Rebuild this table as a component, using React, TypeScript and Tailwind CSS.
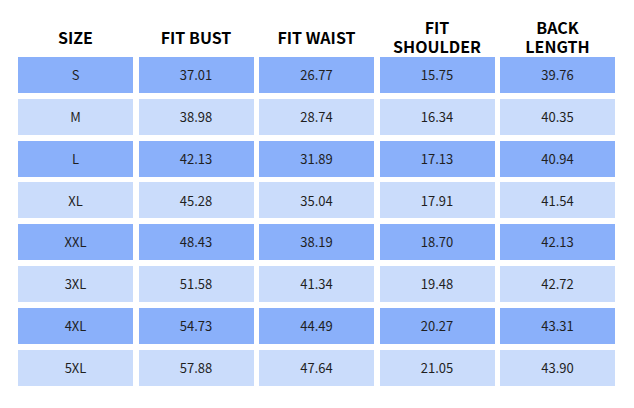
const headers = ['SIZE', 'FIT BUST', 'FIT WAIST', 'FIT SHOULDER', 'BACK LENGTH'];

const rows: string[][] = [
    ['S', '37.01', '26.77', '15.75', '39.76'],
    ['M', '38.98', '28.74', '16.34', '40.35'],
    ['L', '42.13', '31.89', '17.13', '40.94'],
    ['XL', '45.28', '35.04', '17.91', '41.54'],
    ['XXL', '48.43', '38.19', '18.70', '42.13'],
    ['3XL', '51.58', '41.34', '19.48', '42.72'],
    ['4XL', '54.73', '44.49', '20.27', '43.31'],
    ['5XL', '57.88', '47.64', '21.05', '43.90'],
];

export default function App() {
    return (
        <div
            className="h-[408px] w-[634px] bg-white pl-[18px] pt-[17px]"
            style={{ fontFamily: '"Noto Sans CJK SC", "Noto Sans", sans-serif' }}
        >
            {/* Header */}
            <div className="grid h-[40px] grid-cols-[repeat(5,115px)] gap-x-[5.5px]">
                {headers.map((h) => {
                    const [first, second] = h.split(' ');
                    const twoLine = h === 'FIT SHOULDER' || h === 'BACK LENGTH';
                    return (
                        <div
                            key={h}
                            className="flex flex-col items-center justify-center text-center text-[16px] font-bold leading-[19px] text-black"
                        >
                            {twoLine ? (
                                <>
                                    <span>{first}</span>
                                    <span>{second}</span>
                                </>
                            ) : (
                                <span>{h}</span>
                            )}
                        </div>
                    );
                })}
            </div>

            {/* Size rows */}
            <div className="grid grid-cols-[repeat(5,115px)] gap-x-[5.5px] gap-y-[5.8px]">
                {rows.map((row, i) =>
                    row.map((cell, j) => (
                        <div
                            key={`${i}-${j}`}
                            className={`flex h-[36px] items-center justify-center text-[13px] text-[#1f1f1f] ${
                                i % 2 === 0 ? 'bg-[#8ab0fa]' : 'bg-[#cadcfb]'
                            }`}
                        >
                            {cell}
                        </div>
                    ))
                )}
            </div>
        </div>
    );
}
